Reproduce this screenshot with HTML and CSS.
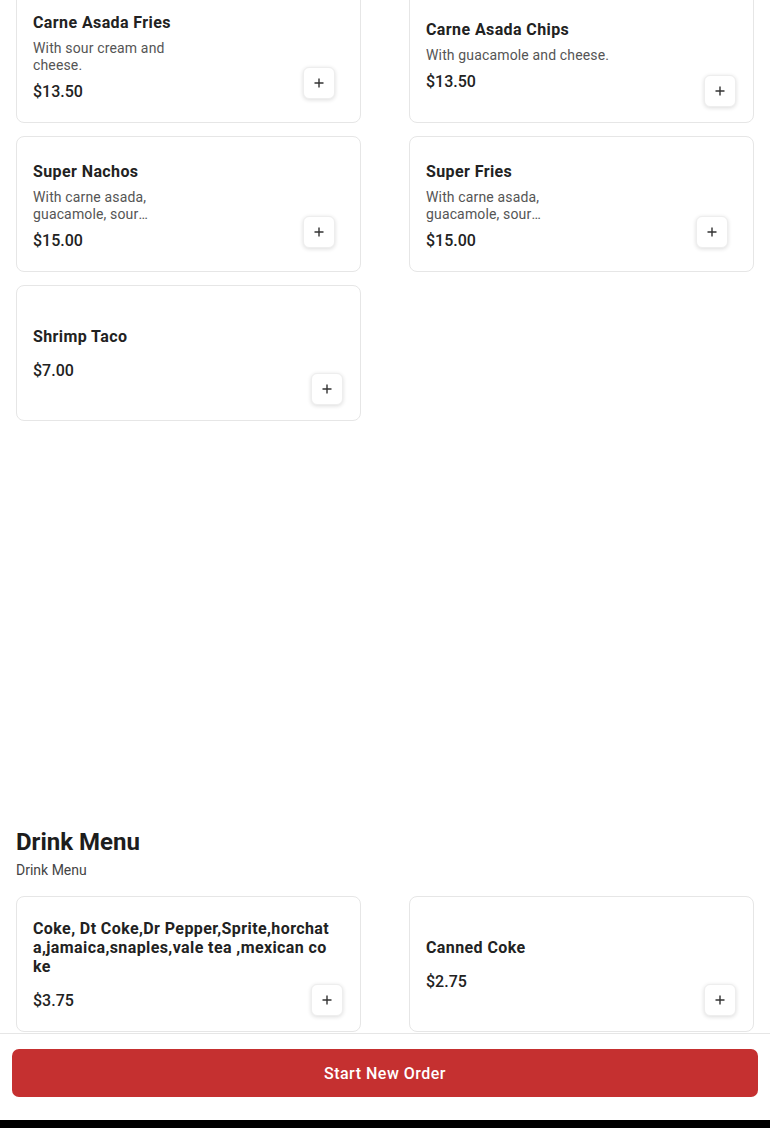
FILE: index.html
```html
<!DOCTYPE html>
<html lang="en">
<head>
<meta charset="utf-8">
<title>Menu</title>
<link rel="stylesheet" href="styles.css">
</head>
<body>
<main class="page">
  <section class="section section--food">
    <div class="grid">
      <div class="card card--media">
        <div class="info">
          <div class="title">Carne Asada Fries</div>
          <div class="desc">With sour cream and cheese.</div>
          <div class="price">$13.50</div>
        </div>
        <button class="add"><svg viewBox="0 0 12 12" width="12" height="12"><path d="M6 1.5v9M1.5 6h9" stroke="#333" stroke-width="1.4" fill="none"/></svg></button>
      </div>
      <div class="card">
        <div class="info">
          <div class="title">Carne Asada Chips</div>
          <div class="desc">With guacamole and cheese.</div>
          <div class="price">$13.50</div>
        </div>
        <button class="add"><svg viewBox="0 0 12 12" width="12" height="12"><path d="M6 1.5v9M1.5 6h9" stroke="#333" stroke-width="1.4" fill="none"/></svg></button>
      </div>
      <div class="card card--media">
        <div class="info">
          <div class="title">Super Nachos</div>
          <div class="desc">With carne asada, guacamole, sour cream and cheese.</div>
          <div class="price">$15.00</div>
        </div>
        <button class="add"><svg viewBox="0 0 12 12" width="12" height="12"><path d="M6 1.5v9M1.5 6h9" stroke="#333" stroke-width="1.4" fill="none"/></svg></button>
      </div>
      <div class="card card--media">
        <div class="info">
          <div class="title">Super Fries</div>
          <div class="desc">With carne asada, guacamole, sour cream and cheese.</div>
          <div class="price">$15.00</div>
        </div>
        <button class="add"><svg viewBox="0 0 12 12" width="12" height="12"><path d="M6 1.5v9M1.5 6h9" stroke="#333" stroke-width="1.4" fill="none"/></svg></button>
      </div>
      <div class="card">
        <div class="info">
          <div class="title">Shrimp Taco</div>
          <div class="desc"></div>
          <div class="price">$7.00</div>
        </div>
        <button class="add"><svg viewBox="0 0 12 12" width="12" height="12"><path d="M6 1.5v9M1.5 6h9" stroke="#333" stroke-width="1.4" fill="none"/></svg></button>
      </div>
    </div>
  </section>

  <section class="section section--drinks">
    <h2 class="section-title">Drink Menu</h2>
    <p class="section-sub">Drink Menu</p>
    <div class="grid">
      <div class="card">
        <div class="info">
          <div class="title title--break">Coke, Dt Coke,Dr Pepper,Sprite,horchata,jamaica,snaples,vale tea ,mexican coke</div>
          <div class="desc"></div>
          <div class="price">$3.75</div>
        </div>
        <button class="add"><svg viewBox="0 0 12 12" width="12" height="12"><path d="M6 1.5v9M1.5 6h9" stroke="#333" stroke-width="1.4" fill="none"/></svg></button>
      </div>
      <div class="card">
        <div class="info">
          <div class="title">Canned Coke</div>
          <div class="desc"></div>
          <div class="price">$2.75</div>
        </div>
        <button class="add"><svg viewBox="0 0 12 12" width="12" height="12"><path d="M6 1.5v9M1.5 6h9" stroke="#333" stroke-width="1.4" fill="none"/></svg></button>
      </div>
    </div>
  </section>
</main>

<footer class="footer">
  <div class="footer-inner">
    <button class="start">Start New Order</button>
  </div>
  <div class="footer-band"></div>
</footer>
</body>
</html>
```

FILE: styles.css
```css
* { box-sizing: border-box; }

html, body {
  margin: 0;
  padding: 0;
  background: #fff;
}

body {
  font-family: Roboto, "Liberation Sans", Arial, sans-serif;
  color: #222;
  overflow: hidden;
  height: 1128px;
}

.page {
  padding: 0 16px;
}

.section--food {
  margin-top: -13px;
}

.section--drinks {
  margin-top: 407px;
}

.grid {
  display: grid;
  grid-template-columns: 1fr 1fr;
  column-gap: 48px;
  row-gap: 13px;
}

.card {
  position: relative;
  display: flex;
  align-items: center;
  min-height: 136px;
  padding: 16px;
  background: #fff;
  border: 1px solid #e6e6e6;
  border-radius: 8px;
}

.info {
  display: flex;
  flex-direction: column;
  gap: 8px;
  width: 297px;
}

.card--media .info {
  width: 140px;
  padding-top: 4px;
}

.title {
  font-size: 16px;
  font-weight: 700;
  line-height: 19px;
  letter-spacing: 0.4px;
  color: #222;
}

.title--break {
  word-break: break-all;
}

.desc {
  font-size: 14px;
  line-height: 17px;
  letter-spacing: 0.15px;
  color: #555;
  display: -webkit-box;
  -webkit-box-orient: vertical;
  -webkit-line-clamp: 2;
  overflow: hidden;
}

.desc:empty {
  display: block;
  height: 0;
  margin-top: -1px;
}

.price {
  font-size: 16px;
  font-weight: 500;
  line-height: 19px;
  color: #222;
}

.add {
  position: absolute;
  right: 17px;
  bottom: 15px;
  width: 32px;
  height: 32px;
  padding: 0;
  display: flex;
  align-items: center;
  justify-content: center;
  background: #fff;
  border: 1px solid #eee;
  border-radius: 6px;
  box-shadow: 0 1px 4px rgba(0, 0, 0, 0.14);
}

.card--media .add {
  right: 25px;
  bottom: 23px;
}

.section-title {
  margin: 0;
  font-size: 24px;
  font-weight: 700;
  line-height: 29px;
  color: #1d1d1d;
}

.section-sub {
  margin: 5px 0 17px;
  font-size: 14px;
  line-height: 17px;
  color: #444;
}

.footer {
  position: fixed;
  left: 0;
  right: 0;
  bottom: 0;
  background: #fff;
  border-top: 1px solid #e6e6e6;
}

.footer-inner {
  padding: 15px 12px 23px;
}

.start {
  display: block;
  width: 100%;
  height: 48px;
  border: 0;
  border-radius: 7px;
  background: #c53030;
  color: #fff;
  font-family: Roboto, "Liberation Sans", Arial, sans-serif;
  font-size: 16px;
  font-weight: 500;
  letter-spacing: 0.5px;
}

.footer-band {
  height: 8px;
  background: #000;
}
```
